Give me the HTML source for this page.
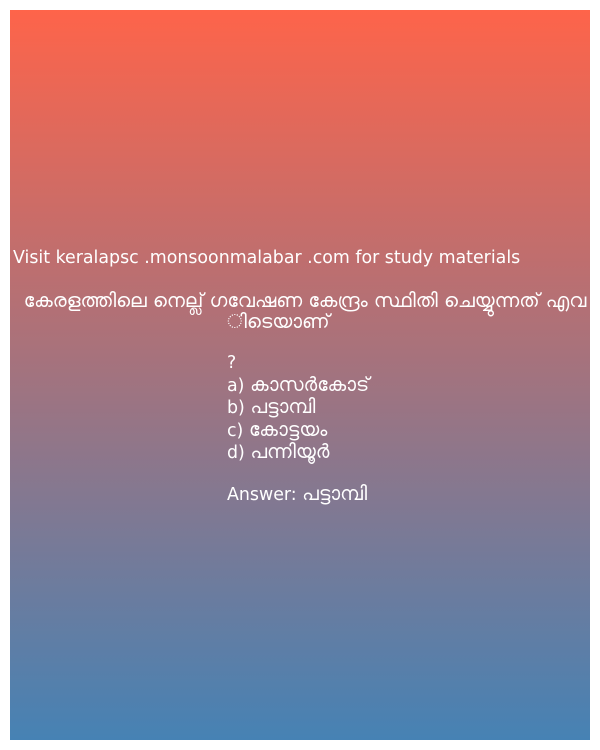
<!DOCTYPE html>
<html><head><meta charset="utf-8"><style>
body{margin:0;width:600px;height:750px;background:#fff;position:relative;overflow:hidden}
#g{position:absolute;left:10px;top:10px;width:580px;height:730px;background:linear-gradient(#fe644a,#4682b4)}
.t{position:absolute;color:#fff;font-family:"DejaVu Sans","Liberation Sans",sans-serif;font-size:17.4px;line-height:22px;white-space:nowrap}
.m{font-size:19.5px}
</style></head><body>
<div id="g"></div>
<div class="t" style="left:13px;top:247px">Visit keralapsc .monsoonmalabar .com for study materials</div>
<div class="t m" style="left:10px;width:590px;text-align:center;top:290px">കേരളത്തിലെ നെല്ല് ഗവേഷണ കേന്ദ്രം സ്ഥിതി ചെയ്യുന്നത് എവ</div>
<div class="t m" style="left:227px;top:311px">ിടെയാണ്</div>
<div class="t" style="left:227px;top:352px">?</div>
<div class="t" style="left:227px;top:374px">a) <span class="m">കാസർകോട്</span></div>
<div class="t" style="left:227px;top:396px">b) <span class="m">പട്ടാമ്പി</span></div>
<div class="t" style="left:227px;top:419px">c) <span class="m">കോട്ടയം</span></div>
<div class="t" style="left:227px;top:441px">d) <span class="m">പന്നിയൂർ</span></div>
<div class="t" style="left:227px;top:483px">Answer: <span class="m">പട്ടാമ്പി</span></div>
</body></html>
